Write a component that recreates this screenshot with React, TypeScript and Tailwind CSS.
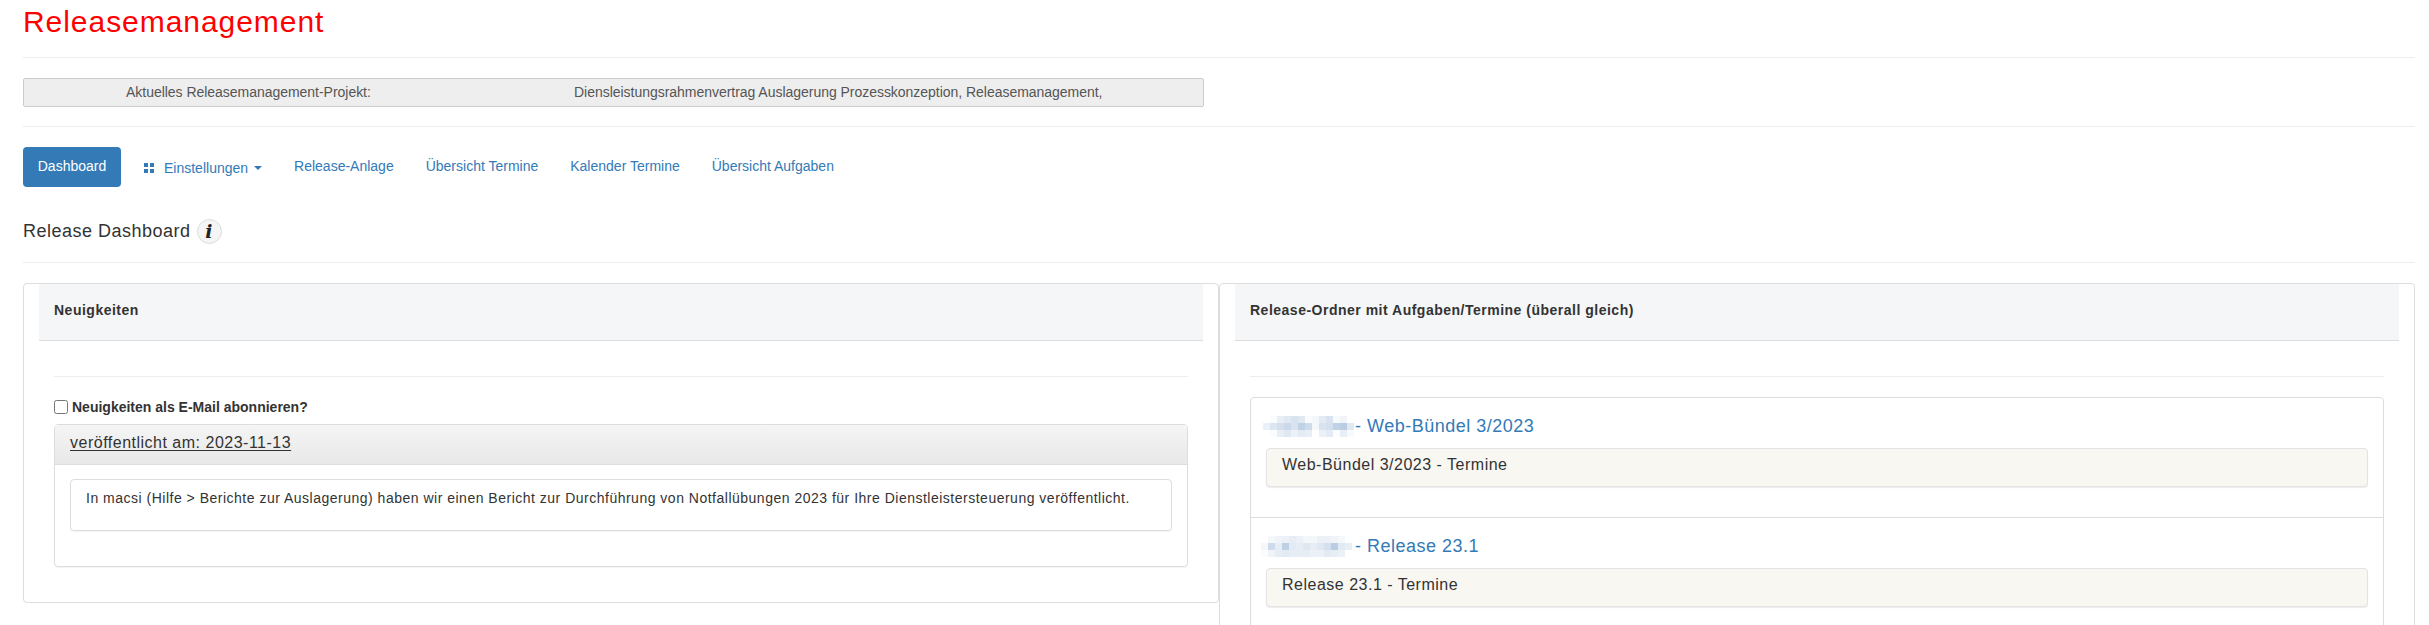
const font = "font-['Liberation_Sans',Arial,sans-serif]";

function Mosaic({ rows, className }: { rows: number[][]; className: string }) {
  return (
    <svg width={rows[0].length * 7} height={rows.length * 7} className={`block shrink-0 ${className}`}>
      {rows.map((row, y) =>
        row.map((o, x) => <rect key={`${x}-${y}`} x={x * 7} y={y * 7} width={7} height={7} fill="#3f74b0" opacity={o} />)
      )}
    </svg>
  );
}

function Well({ children }: { children: React.ReactNode }) {
  return (
    <div className="h-[39px] rounded border border-[#e3e3e3] bg-[#f8f7f2] px-[15px] pt-[6px] text-[16px] leading-[20px] tracking-[0.5px] text-[#333] shadow-[0_1px_1px_rgba(0,0,0,0.08)]">
      {children}
    </div>
  );
}

const mosaicA = [
  [0, 0.02, 0.12, 0.16, 0.2, 0.16, 0.03, 0.06, 0.14, 0.2, 0.04, 0.08, 0],
  [0.1, 0.18, 0.22, 0.28, 0.2, 0.32, 0.26, 0.05, 0.2, 0.22, 0.32, 0.36, 0.16],
  [0, 0.02, 0.12, 0.16, 0.1, 0.14, 0.12, 0, 0.1, 0.14, 0.02, 0.12, 0.04],
];
const mosaicB = [
  [0, 0.05, 0.08, 0.1, 0.13, 0.1, 0.06, 0.06, 0.1, 0.1, 0.08, 0.05, 0],
  [0.05, 0.26, 0.13, 0.34, 0.15, 0.13, 0.17, 0.13, 0.17, 0.22, 0.36, 0.15, 0.12],
  [0.02, 0.08, 0.13, 0.15, 0.13, 0.13, 0.13, 0.1, 0.1, 0.15, 0.13, 0.1, 0],
];

export default function App() {
  return (
    <div className={`${font} h-[625px] overflow-hidden bg-white pl-[23px] pr-[14px] text-[#333]`}>
      <h1 className="pt-[3px] text-[30px] leading-[38px] tracking-[0.95px] text-[#f00]">Releasemanagement</h1>
      <div className="mt-[16px] border-t border-[#eee]" />

      <div className="mt-[20px] flex h-[29px] w-[1181px] items-center rounded-[2px] border border-[#ccc] bg-[#eee] text-[14px] tracking-[-0.03px] text-[#555]">
        <div className="w-[550px] pl-[102px]">Aktuelles Releasemanagement-Projekt:</div>
        <div>Diensleistungsrahmenvertrag Auslagerung Prozesskonzeption, Releasemanagement,</div>
      </div>
      <div className="mt-[19px] border-t border-[#eee]" />

      <nav className="mt-[20px] flex h-[40px] items-center text-[14px] text-[#337ab7]">
        <a className="flex h-[40px] w-[98px] items-center justify-center rounded bg-[#337ab7] pb-[2px] text-[#fff]">Dashboard</a>
        <a className="ml-[23px] flex items-center pt-[2px]">
          <svg width="10" height="10" viewBox="0 0 10 10" className="mr-[10px] fill-[#337ab7]">
            <rect x="0" y="0" width="4" height="4" />
            <rect x="6" y="0" width="4" height="4" />
            <rect x="0" y="6" width="4" height="4" />
            <rect x="6" y="6" width="4" height="4" />
          </svg>
          Einstellungen
          <span className="ml-[6px] h-0 w-0 border-x-[4px] border-t-[4px] border-x-transparent border-t-[#337ab7]" />
        </a>
        <a className="ml-[32px] pb-[2px]">Release-Anlage</a>
        <a className="ml-[32px] pb-[2px]">Übersicht Termine</a>
        <a className="ml-[32px] pb-[2px]">Kalender Termine</a>
        <a className="ml-[32px] pb-[2px]">Übersicht Aufgaben</a>
      </nav>

      <div className="mt-[32px] flex h-[25px] items-center text-[18px] tracking-[0.5px]">
        Release Dashboard
        <span className="ml-[6px] flex h-[25px] w-[25px] items-center justify-center rounded-full border border-[#ddd] bg-[#f5f5f5] font-['DejaVu_Serif',serif] text-[19px] font-bold italic text-[#222]">
          i
        </span>
      </div>
      <div className="mt-[18px] border-t border-[#eee]" />

      <div className="mt-[20px] flex items-start">
        <section className="h-[320px] flex-1 rounded border border-[#ddd] px-[15px]">
          <header className="h-[57px] border-b border-[#ddd] bg-[#f5f6f7] px-[15px] pt-[16px] text-[14px] font-bold leading-[20px] tracking-[0.5px]">Neuigkeiten</header>
          <div className="mx-[15px] mt-[35px] border-t border-[#eee]" />
          <div className="mx-[15px]">
            <label className="mt-[22px] flex h-[16px] items-center text-[14px] font-bold">
              <input type="checkbox" className="mr-[4px] h-[14px] w-[14px]" />
              Neuigkeiten als E-Mail abonnieren?
            </label>
            <div className="mt-[9px] h-[143px] rounded border border-[#ddd] shadow-[0_1px_1px_rgba(0,0,0,0.05)]">
              <div className="h-[40px] border-b border-[#ddd] bg-gradient-to-b from-[#f5f5f5] to-[#e8e8e8] px-[15px] pt-[8px] text-[16px] leading-[20px] tracking-[0.5px] underline underline-offset-2">
                veröffentlicht am: 2023-11-13
              </div>
              <div className="mx-[15px] mt-[14px] h-[52px] rounded border border-[#ddd] px-[15px] pt-[8px] text-[14px] leading-[20px] tracking-[0.5px] shadow-[0_1px_1px_rgba(0,0,0,0.05)]">
                In macsi (Hilfe &gt; Berichte zur Auslagerung) haben wir einen Bericht zur Durchführung von Notfallübungen 2023 für Ihre Dienstleistersteuerung veröffentlicht.
              </div>
            </div>
          </div>
        </section>

        <section className="h-[600px] flex-1 rounded border border-[#ddd] px-[15px]">
          <header className="h-[57px] border-b border-[#ddd] bg-[#f5f6f7] px-[15px] pt-[16px] text-[14px] font-bold leading-[20px] tracking-[0.5px]">Release-Ordner mit Aufgaben/Termine (überall gleich)</header>
          <div className="mx-[15px] mt-[35px] border-t border-[#eee]" />
          <div className="mx-[15px] mt-[20px] rounded-t border border-[#ddd]">
            <div className="h-[120px] border-b border-[#ddd] px-[15px] pt-[17px]">
              <div className="flex h-[22px] items-center text-[18px] tracking-[0.5px] text-[#337ab7]">
                <Mosaic rows={mosaicA} className="-ml-[3px]" />
                <span className="ml-[1px]">- Web-Bündel 3/2023</span>
              </div>
              <div className="mt-[11px]"><Well>Web-Bündel 3/2023 - Termine</Well></div>
            </div>
            <div className="h-[120px] px-[15px] pt-[17px]">
              <div className="flex h-[22px] items-center text-[18px] tracking-[0.5px] text-[#337ab7]">
                <Mosaic rows={mosaicB} className="-ml-[5px]" />
                <span className="ml-[3px]">- Release 23.1</span>
              </div>
              <div className="mt-[11px]"><Well>Release 23.1 - Termine</Well></div>
            </div>
          </div>
        </section>
      </div>
    </div>
  );
}
